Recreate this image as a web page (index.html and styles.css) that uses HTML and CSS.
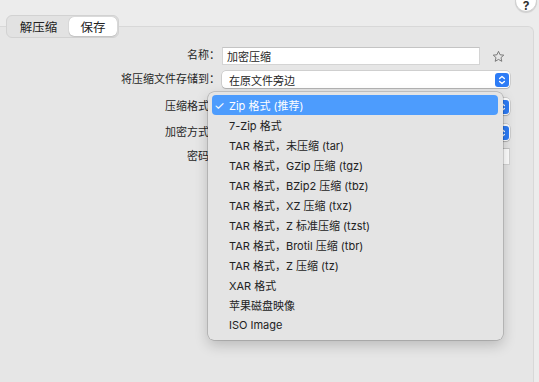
FILE: index.html
```html
<!DOCTYPE html>
<html lang="zh-CN">
<head>
    <meta charset="UTF-8">
    <title>压缩设置</title>
    <link rel="stylesheet" href="styles.css">
</head>
<body>

<button class="help-btn" type="button">?</button>

<!-- Reiter oben -->
<div class="tabs">
    <span class="tab">解压缩</span>
    <span class="tab active">保存</span>
</div>

<div class="panel">
    <div class="form-grid">
        <label class="lbl">名称：</label>
        <div class="ctrl name-ctrl">
            <span class="field">加密压缩</span>
            <svg class="star" width="13" height="13" viewBox="0 0 24 24">
                <path d="M12 2.5l2.9 6.3 6.8.7-5.1 4.6 1.5 6.8L12 17.4l-6.1 3.5 1.5-6.8L2.3 9.5l6.8-.7z" fill="none" stroke="#6b6b6b" stroke-width="1.6" stroke-linejoin="round"/>
            </svg>
        </div>

        <label class="lbl">将压缩文件存储到：</label>
        <div class="ctrl">
            <div class="popup"><span>在原文件旁边</span><i class="stepper"></i></div>
        </div>

        <label class="lbl">压缩格式：</label>
        <div class="ctrl">
            <!-- Inhalt liegt unter dem Menü -->
            <div class="popup"><span></span><i class="stepper"></i></div>
        </div>

        <label class="lbl">加密方式：</label>
        <div class="ctrl">
            <div class="popup"><span></span><i class="stepper"></i></div>
        </div>

        <label class="lbl">密码：</label>
        <div class="ctrl">
            <span class="field pw"></span>
        </div>
    </div>
</div>

<!-- Aufgeklapptes Menü -->
<ul class="menu">
    <li class="selected"><span class="check">✓</span>Zip 格式 (推荐)</li>
    <li><span class="check"></span>7-Zip 格式</li>
    <li><span class="check"></span>TAR 格式，未压缩 (tar)</li>
    <li><span class="check"></span>TAR 格式，GZip 压缩 (tgz)</li>
    <li><span class="check"></span>TAR 格式，BZip2 压缩 (tbz)</li>
    <li><span class="check"></span>TAR 格式，XZ 压缩 (txz)</li>
    <li><span class="check"></span>TAR 格式，Z 标准压缩 (tzst)</li>
    <li><span class="check"></span>TAR 格式，Brotil 压缩 (tbr)</li>
    <li><span class="check"></span>TAR 格式，Z 压缩 (tz)</li>
    <li><span class="check"></span>XAR 格式</li>
    <li><span class="check"></span>苹果磁盘映像</li>
    <li><span class="check"></span>ISO Image</li>
</ul>

</body>
</html>
```

FILE: styles.css
```css
body {
    margin: 0;
    padding: 0;
    height: 382px;
    overflow: hidden;
    background-color: #ececec;
    font-family: Inter, "Noto Sans CJK SC", sans-serif;
    color: #262626;
    font-size: 11px;
}

.help-btn {
    position: absolute;
    left: 515px;
    top: -10px;
    width: 22px;
    height: 22px;
    border-radius: 50%;
    border: 1px solid #cfcfcf;
    background: #fff;
    font: bold 12px Inter, sans-serif;
    color: #333;
    padding: 0;
    padding-top: 7px;
    box-shadow: 0 1px 1px rgba(0, 0, 0, 0.12);
}

/* Reiter */
.tabs {
    position: relative;
    z-index: 1;
    display: inline-flex;
    margin: 15px 0 0 6px;
    padding: 1px;
    height: 19px;
    background: #e2e2e2;
    border: 1px solid #d2d2d2;
    border-radius: 6px;
    font-size: 12.5px;
}

.tab {
    display: flex;
    align-items: center;
    justify-content: center;
    width: 61px;
    color: #222;
}

.tab.active {
    width: 48px;
    background: #fff;
    border-radius: 5px;
    box-shadow: 0 0 1px rgba(0, 0, 0, 0.35), 0 1px 1px rgba(0, 0, 0, 0.1);
}

.panel {
    margin-top: -12px;
    width: 534px;
    height: 357px;
    box-sizing: border-box;
    padding-top: 20px;
    background: #e6e6e6;
    border: 1px solid #d8d8d8;
    border-left: none;
    border-bottom: none;
    border-radius: 0 6px 0 0;
}

.form-grid {
    display: grid;
    grid-template-columns: 220px 288px;
    grid-template-rows: 24px 27px 26px 24px auto;
    column-gap: 2px;
    align-items: start;
}

.lbl {
    text-align: right;
    line-height: 17px;
    white-space: nowrap;
}

.ctrl {
    display: flex;
    align-items: center;
    height: 17px;
}

.name-ctrl {
    height: 18px;
}

.field {
    flex: 1;
    height: 18px;
    box-sizing: border-box;
    padding-left: 4px;
    line-height: 18px;
    background: #fff;
    border: 1px solid #d4d4d4;
    border-top-color: #c4c4c4;
}

.field.pw {
    height: 17px;
}

.star {
    margin: 0 5px 0 12px;
}

.popup {
    flex: 1;
    display: flex;
    align-items: center;
    justify-content: space-between;
    height: 17px;
    box-sizing: border-box;
    padding-left: 7px;
    background: #fff;
    border-radius: 4px;
    box-shadow: 0 0 0 0.5px rgba(0, 0, 0, 0.2), 0 1px 1px rgba(0, 0, 0, 0.15);
}

.stepper {
    width: 14px;
    height: 14px;
    margin-right: 1px;
    border-radius: 3px;
    background: #2d7cf6 url("data:image/svg+xml,%3Csvg xmlns='http://www.w3.org/2000/svg' width='14' height='14'%3E%3Cpath d='M4.6 5.6L7 3.4l2.4 2.2M4.6 8.4L7 10.6l2.4-2.2' fill='none' stroke='white' stroke-width='1.3' stroke-linecap='round' stroke-linejoin='round'/%3E%3C/svg%3E") no-repeat center;
}

/* Menü */
.menu {
    position: absolute;
    left: 208px;
    top: 92px;
    width: 295px;
    box-sizing: border-box;
    margin: 0;
    padding: 3px 5px 5px 4px;
    list-style: none;
    background: #e4e4e4;
    border-radius: 6px;
    box-shadow: 0 0 0 0.5px rgba(0, 0, 0, 0.28), 0 5px 14px rgba(0, 0, 0, 0.2);
}

.menu li {
    display: flex;
    align-items: center;
    height: 20px;
    white-space: nowrap;
    color: #222;
}

.menu li.selected {
    background: #4d9cfd;
    color: #fff;
    border-radius: 4px;
}

.check {
    width: 15px;
    padding-left: 2px;
    font-size: 12px;
}
```
